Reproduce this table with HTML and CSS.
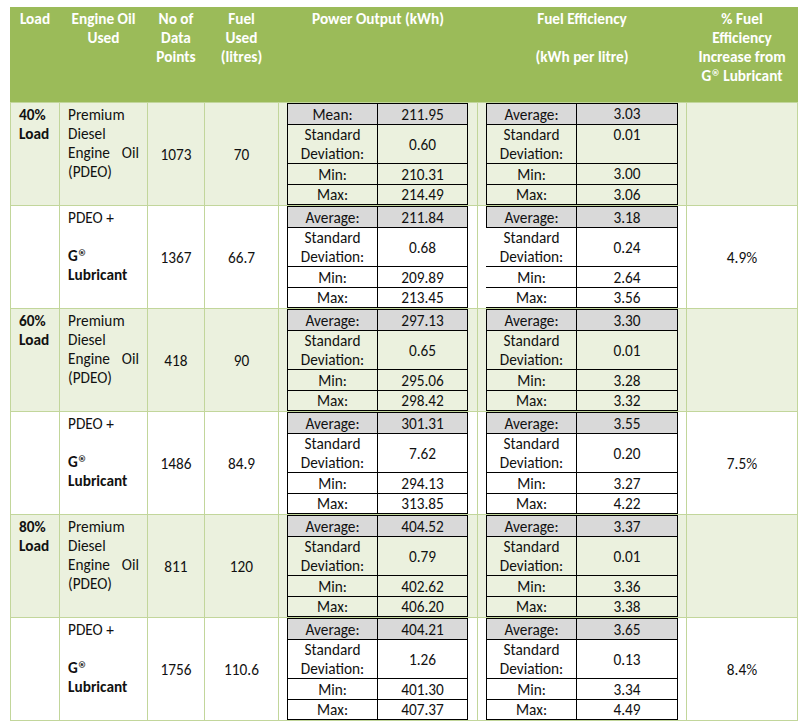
FILE: index.html
```html
<!DOCTYPE html>
<html>
<head>
<meta charset="utf-8">
<link rel="stylesheet" href="styles.css">
</head>
<body>
<table class="data">
  <colgroup>
    <col class="c-load"><col class="c-oil"><col class="c-pts"><col class="c-fuel"><col class="c-pow"><col class="c-eff"><col class="c-pct">
  </colgroup>
  <thead>
    <tr>
      <th>Load</th>
      <th>Engine Oil<br>Used</th>
      <th>No of<br>Data<br>Points</th>
      <th>Fuel<br>Used<br>(litres)</th>
      <th>Power Output (kWh)</th>
      <th>Fuel Efficiency<br><br>(kWh per litre)</th>
      <th>% Fuel<br>Efficiency<br>Increase from<br>G<span class="reg">®</span> Lubricant</th>
    </tr>
  </thead>
  <tbody>
    <tr class="alt">
      <td class="load">40%<br>Load</td>
      <td class="oil">Premium Diesel Engine Oil (PDEO)</td>
      <td>1073</td>
      <td>70</td>
      <td class="stats pow">
        <table class="st">
          <tr class="hd r1"><td>Mean:</td><td>211.95</td></tr>
          <tr class="r2"><td>Standard<br>Deviation:</td><td>0.60</td></tr>
          <tr class="r1"><td>Min:</td><td>210.31</td></tr>
          <tr class="r4"><td>Max:</td><td>214.49</td></tr>
        </table>
      </td>
      <td class="stats eff">
        <table class="st st-eff st-high">
          <tr class="hd r1"><td>Average:</td><td>3.03</td></tr>
          <tr class="r2"><td>Standard<br>Deviation:</td><td class="top">0.01</td></tr>
          <tr class="r1"><td>Min:</td><td>3.00</td></tr>
          <tr class="r4"><td>Max:</td><td>3.06</td></tr>
        </table>
      </td>
      <td></td>
    </tr>
    <tr>
      <td class="load"></td>
      <td class="oil">PDEO +<br><br><b>G<span class="reg">®</span><br>Lubricant</b></td>
      <td>1367</td>
      <td>66.7</td>
      <td class="stats pow">
        <table class="st">
          <tr class="hd r1"><td>Average:</td><td>211.84</td></tr>
          <tr class="r2"><td>Standard<br>Deviation:</td><td>0.68</td></tr>
          <tr class="r1"><td>Min:</td><td>209.89</td></tr>
          <tr class="r4"><td>Max:</td><td>213.45</td></tr>
        </table>
      </td>
      <td class="stats eff">
        <table class="st st-eff st-open">
          <tr class="hd r1"><td>Average:</td><td>3.18</td></tr>
          <tr class="r2"><td>Standard<br>Deviation:</td><td>0.24</td></tr>
          <tr class="r1"><td>Min:</td><td>2.64</td></tr>
          <tr class="r4"><td>Max:</td><td>3.56</td></tr>
        </table>
      </td>
      <td>4.9%</td>
    </tr>
    <tr class="alt">
      <td class="load">60%<br>Load</td>
      <td class="oil">Premium Diesel Engine Oil (PDEO)</td>
      <td>418</td>
      <td>90</td>
      <td class="stats pow">
        <table class="st">
          <tr class="hd r1"><td>Average:</td><td>297.13</td></tr>
          <tr class="r2"><td>Standard<br>Deviation:</td><td>0.65</td></tr>
          <tr class="r1"><td>Min:</td><td>295.06</td></tr>
          <tr class="r4"><td>Max:</td><td>298.42</td></tr>
        </table>
      </td>
      <td class="stats eff">
        <table class="st st-eff">
          <tr class="hd r1"><td>Average:</td><td>3.30</td></tr>
          <tr class="r2"><td>Standard<br>Deviation:</td><td>0.01</td></tr>
          <tr class="r1"><td>Min:</td><td>3.28</td></tr>
          <tr class="r4"><td>Max:</td><td>3.32</td></tr>
        </table>
      </td>
      <td></td>
    </tr>
    <tr>
      <td class="load"></td>
      <td class="oil">PDEO +<br><br><b>G<span class="reg">®</span><br>Lubricant</b></td>
      <td>1486</td>
      <td>84.9</td>
      <td class="stats pow">
        <table class="st">
          <tr class="hd r1"><td>Average:</td><td>301.31</td></tr>
          <tr class="r2"><td>Standard<br>Deviation:</td><td>7.62</td></tr>
          <tr class="r1"><td>Min:</td><td>294.13</td></tr>
          <tr class="r4"><td>Max:</td><td>313.85</td></tr>
        </table>
      </td>
      <td class="stats eff">
        <table class="st st-eff">
          <tr class="hd r1"><td>Average:</td><td>3.55</td></tr>
          <tr class="r2"><td>Standard<br>Deviation:</td><td>0.20</td></tr>
          <tr class="r1"><td>Min:</td><td>3.27</td></tr>
          <tr class="r4"><td>Max:</td><td>4.22</td></tr>
        </table>
      </td>
      <td>7.5%</td>
    </tr>
    <tr class="alt">
      <td class="load">80%<br>Load</td>
      <td class="oil">Premium Diesel Engine Oil (PDEO)</td>
      <td>811</td>
      <td>120</td>
      <td class="stats pow">
        <table class="st">
          <tr class="hd r1"><td>Average:</td><td>404.52</td></tr>
          <tr class="r2"><td>Standard<br>Deviation:</td><td>0.79</td></tr>
          <tr class="r1"><td>Min:</td><td>402.62</td></tr>
          <tr class="r4"><td>Max:</td><td>406.20</td></tr>
        </table>
      </td>
      <td class="stats eff">
        <table class="st st-eff">
          <tr class="hd r1"><td>Average:</td><td>3.37</td></tr>
          <tr class="r2"><td>Standard<br>Deviation:</td><td>0.01</td></tr>
          <tr class="r1"><td>Min:</td><td>3.36</td></tr>
          <tr class="r4"><td>Max:</td><td>3.38</td></tr>
        </table>
      </td>
      <td></td>
    </tr>
    <tr>
      <td class="load"></td>
      <td class="oil">PDEO +<br><br><b>G<span class="reg">®</span><br>Lubricant</b></td>
      <td>1756</td>
      <td>110.6</td>
      <td class="stats pow">
        <table class="st">
          <tr class="hd r1"><td>Average:</td><td>404.21</td></tr>
          <tr class="r2"><td>Standard<br>Deviation:</td><td>1.26</td></tr>
          <tr class="r1"><td>Min:</td><td>401.30</td></tr>
          <tr class="r4"><td>Max:</td><td>407.37</td></tr>
        </table>
      </td>
      <td class="stats eff">
        <table class="st st-eff">
          <tr class="hd r1"><td>Average:</td><td>3.65</td></tr>
          <tr class="r2"><td>Standard<br>Deviation:</td><td>0.13</td></tr>
          <tr class="r1"><td>Min:</td><td>3.34</td></tr>
          <tr class="r4"><td>Max:</td><td>4.49</td></tr>
        </table>
      </td>
      <td>8.4%</td>
    </tr>
  </tbody>
</table>
</body>
</html>
```

FILE: styles.css
```css
html, body {
  background: #ffffff;
}

body {
  margin: 7px 0 0 10px;
  font-family: Calibri, Carlito, Lato, "Liberation Sans", sans-serif;
  font-size: 15.3px;
  line-height: 19px;
  color: #111111;
}

.data {
  border-collapse: collapse;
  table-layout: fixed;
  width: 787px;
}

.c-load { width: 49px; }
.c-oil { width: 88px; }
.c-pts { width: 57px; }
.c-fuel { width: 74px; }
.c-pow { width: 199px; }
.c-eff { width: 209px; }
.c-pct { width: 111px; }

.data > thead > tr > th {
  background: #9bbb59;
  color: #ffffff;
  font-weight: bold;
  text-align: center;
  vertical-align: top;
  padding: 1px 2px 0;
  height: 93px;
  border: 1px solid #9bbb59;
  border-bottom-color: #c2d69b;
}

.data > tbody > tr > td {
  border: 1px solid #c2d69b;
  padding: 1px 8px;
  text-align: center;
  vertical-align: middle;
  background: #ffffff;
}

.data > tbody > tr.alt > td {
  background: #ebf1de;
}

.data > tbody > tr > td.load {
  text-align: left;
  vertical-align: top;
  font-weight: bold;
  padding: 2px 0 0 8px;
}

.data > tbody > tr > td.oil {
  text-align: justify;
  vertical-align: top;
  padding-top: 2px;
}

.data > tbody > tr > td.stats {
  padding: 0 10px 0 8px;
  vertical-align: top;
}

.data > tbody > tr > td.eff {
  padding: 0 11px 0 8px;
}

.reg {
  font-family: "DejaVu Sans", sans-serif;
  font-size: 8.5px;
  font-weight: bold;
  line-height: 0;
  vertical-align: 5px;
}

b {
  font-weight: bold;
}

.st {
  border-collapse: collapse;
  table-layout: fixed;
  width: 181px;
}

.st-eff {
  width: 190px;
}

.st td {
  border: 1px solid #000000;
  padding: 0;
  text-align: center;
  vertical-align: middle;
  line-height: 19px;
  width: 50%;
}

.st-eff td:first-child {
  width: 89px;
}

.st-eff td:last-child {
  width: 100px;
}

.st tr.hd td {
  background: #d9d9d9;
}

.st tr.r1 td { height: 20px; }
.st tr.r2 td { height: 38px; }
.st tr.r4 td { height: 18px; }

.st td.top {
  vertical-align: top;
}

.st-high tr td:last-child {
  vertical-align: top;
}

.st-open tr:not(.hd) td:first-child {
  border-left-color: transparent;
}
```
